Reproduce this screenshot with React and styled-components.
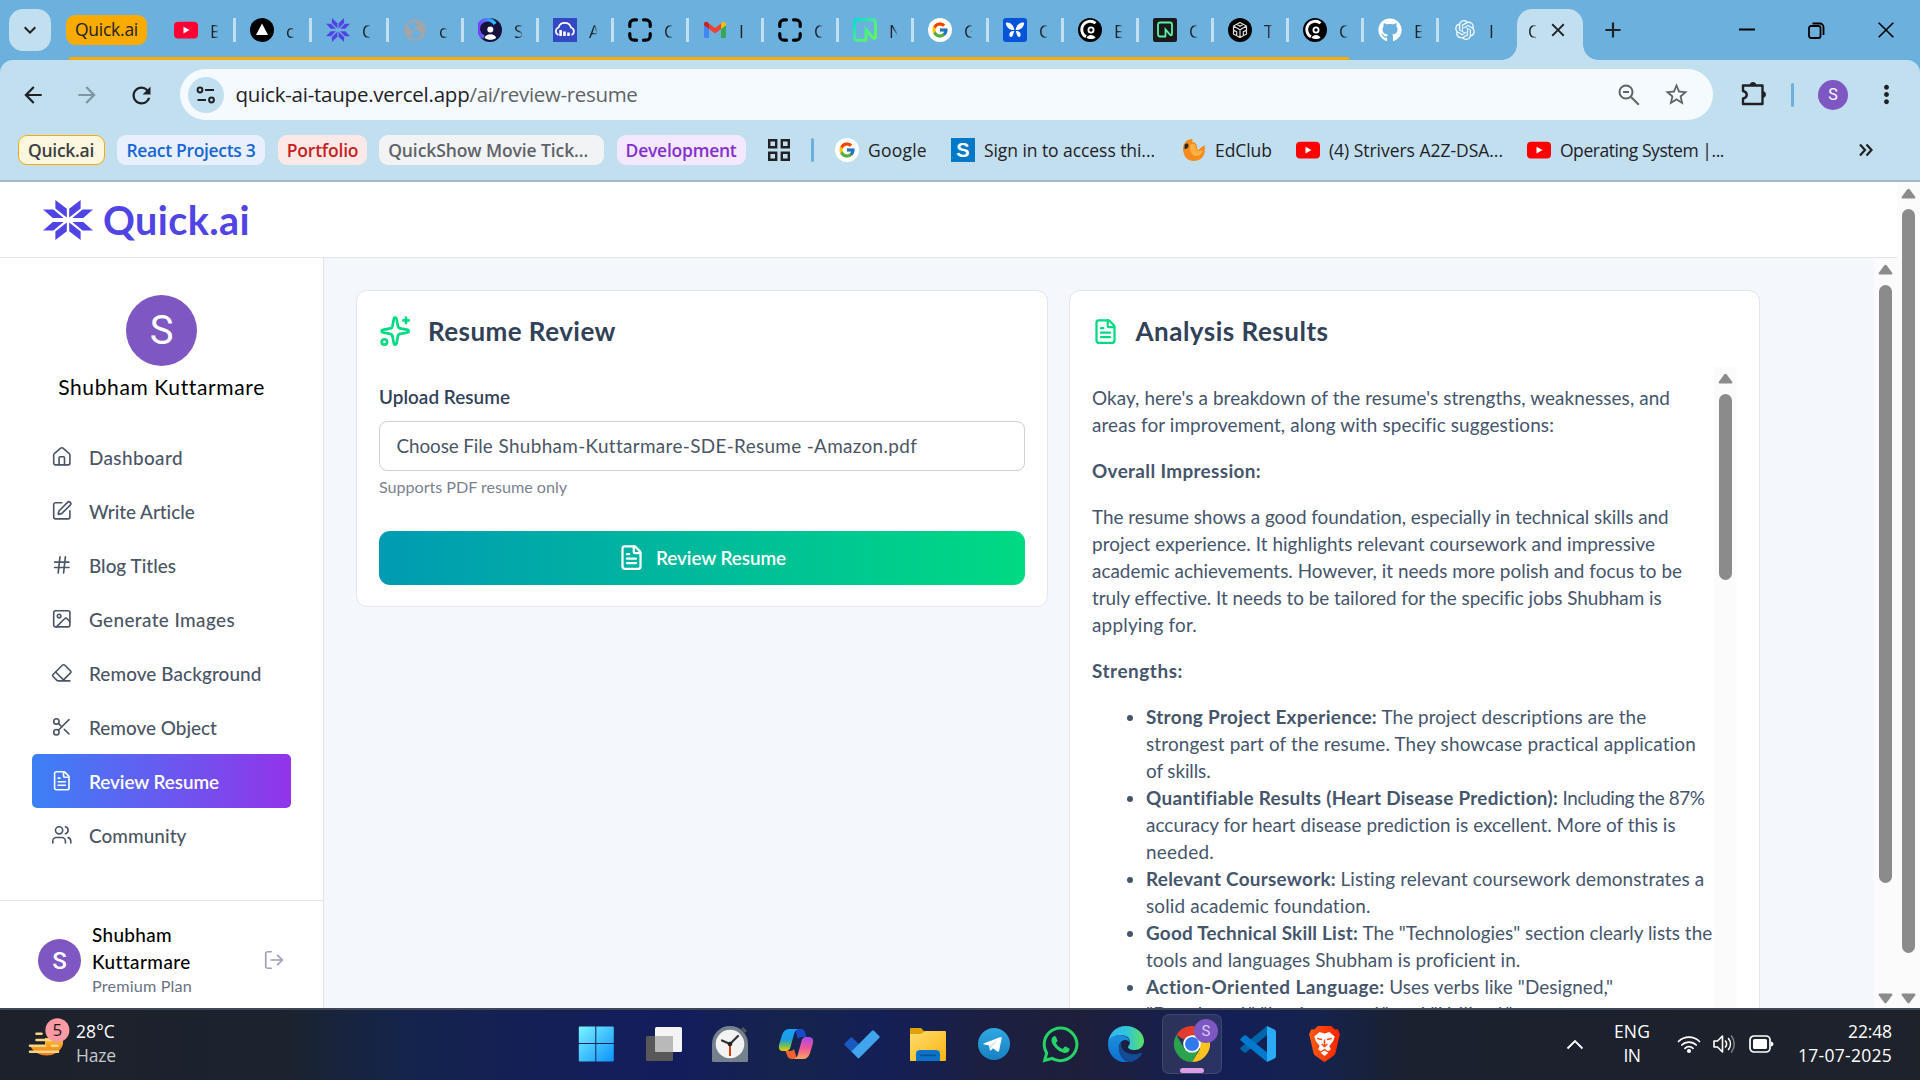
import React, { useLayoutEffect, useRef, useState } from 'react';
import styled, { createGlobalStyle } from 'styled-components';
import {
  House, SquarePen, Hash, Image, Eraser, Scissors, FileText, Users, LogOut, Sparkles,
} from 'lucide-react';
import { FcGoogle } from 'react-icons/fc';
import { FaGithub, FaWhatsapp } from 'react-icons/fa';
import { RiOpenaiFill } from 'react-icons/ri';
import {
  MdArrowBack, MdArrowForward, MdRefresh, MdStarOutline, MdMoreVert,
  MdKeyboardArrowDown, MdClose, MdAdd,
} from 'react-icons/md';

const ui = '"Open Sans", "Noto Sans", sans-serif';
const brand = 'Lato, "Open Sans", sans-serif';

const Global = createGlobalStyle`
  *, *::before, *::after { box-sizing: border-box; }
  body { margin: 0; overflow: hidden; }
  svg { display: block; flex: none; }
  p, h1, h2, ul { margin: 0; padding: 0; }
`;

/* ---------- text set on a known measure ---------- */
const Line = styled.span`
  display: inline-block;
  white-space: pre;
`;

function Fit({ w, children }) {
  const ref = useRef(null);
  const [spacing, setSpacing] = useState(0);
  useLayoutEffect(() => {
    const el = ref.current;
    el.style.letterSpacing = '0px';
    const natural = el.getBoundingClientRect().width;
    const s = (w - natural) / Math.max(1, el.textContent.length);
    el.style.letterSpacing = `${s}px`;
    setSpacing(s);
  }, [w]);
  return <Line ref={ref} style={{ letterSpacing: `${spacing}px` }}>{children}</Line>;
}

/* ---------- frame ---------- */
const Screen = styled.div`
  width: 1920px;
  height: 1080px;
  display: flex;
  flex-direction: column;
  overflow: hidden;
  background: #6cb1dd;
  font-family: ${ui};
  color: #1f2124;
`;

/* ---------- tab strip ---------- */
const TabStrip = styled.div`
  position: relative;
  height: 60px;
  flex: none;
  display: flex;
  align-items: center;
  padding-left: 9px;
`;
const TabSearch = styled.div`
  width: 42px;
  height: 42px;
  border-radius: 14px;
  background: #c2dff0;
  display: grid;
  place-items: center;
`;
const GroupChip = styled.div`
  width: 81px;
  height: 30px;
  margin: 0 13px 0 15px;
  border-radius: 9px;
  background: #f9ab00;
  font-size: 17.5px;
  line-height: 29px;
  text-align: center;
`;
const GroupLine = styled.div`
  position: absolute;
  left: 69px;
  top: 57px;
  width: 1280px;
  height: 3px;
  background: #f9ab00;
`;
const Tab = styled.div`
  width: ${(p) => p.$w}px;
  height: 24px;
  padding-left: 14px;
  display: flex;
  align-items: center;
  border-right: ${(p) => (p.$last ? 0 : 3)}px solid #c2dff0;
`;
const TabTitle = styled.span`
  width: 8px;
  margin-left: ${(p) => (p.$active ? 0 : 12)}px;
  overflow: hidden;
  font-size: 17.5px;
  line-height: 24px;
  padding-top: 2px;
  mask-image: linear-gradient(90deg, #000 50%, rgba(0, 0, 0, 0.25));
`;
const ActiveTab = styled.div`
  position: relative;
  width: 66px;
  height: 51px;
  margin: 9px 0 0 20px;
  padding: 0 14px 9px 11px;
  display: flex;
  align-items: center;
  justify-content: space-between;
  border-radius: 15px 15px 0 0;
  background: #c2dff0;
  &::before, &::after {
    content: '';
    position: absolute;
    bottom: 0;
    width: 15px;
    height: 15px;
  }
  &::before { left: -15px; background: radial-gradient(circle at 0 0, transparent 14.5px, #c2dff0 15px); }
  &::after { right: -15px; background: radial-gradient(circle at 100% 0, transparent 14.5px, #c2dff0 15px); }
`;
const NewTab = styled.div`
  margin-left: 17px;
  width: 26px;
  display: grid;
  place-items: center;
`;
const WindowButtons = styled.div`
  margin-left: auto;
  padding-right: 26.5px;
  display: flex;
  align-items: center;
  gap: 53px;
`;

const YouTube = ({ color = '#ff0033' }) => (
  <svg width="24" height="24" viewBox="0 0 24 24">
    <rect y="3.8" width="24" height="16.6" rx="4" fill={color} />
    <path d="M9.5 8.7v6.8l6-3.4z" fill="#fff" />
  </svg>
);
const Triangle = () => (
  <svg width="24" height="24"><circle cx="12" cy="12" r="12" fill="#000" /><path d="M12 5.5 18 17H6z" fill="#fff" /></svg>
);
const Burst = ({ w = 24, h = 24 }) => (
  <svg width={w} height={h} viewBox="-25 -20 50 40" preserveAspectRatio="none" fill="#5044e5">
    {[[1, 1], [-1, 1], [1, -1], [-1, -1]].map(([x, y]) => (
      <g key={`${x}${y}`} transform={`scale(${x} ${y})`}>
        <path d="M-12.6-20-1.2-11.2V-2.4L-12.6-11.6z" />
        <path d="M-25-10.6h10.5L-4.4-1.9h-10.8z" />
      </g>
    ))}
  </svg>
);
const Globe = () => (
  <svg width="24" height="24" viewBox="0 0 24 24">
    <circle cx="12" cy="12" r="9.8" fill="none" stroke="#a2a5a9" strokeWidth="2" />
    <path d="M3 9c3-1 5 1.500 6 3s2 2 0 4-.5 3.500-1 4.500c-4-2-6.500-7-5-11.500zM10 2.500c1 3 5 2 4.500 5s-4 1.500-3 4 5 0 6 2.500-1 5-3 7c6-1 8-6 7-11S15 1.500 10 2.500z" fill="#a2a5a9" />
  </svg>
);
const Profile = () => (
  <svg width="24" height="24" viewBox="0 0 24 24">
    <defs><linearGradient id="prof" x1="0" x2="1"><stop stopColor="#7a3cff" /><stop offset="1" stopColor="#20c4ff" /></linearGradient></defs>
    <circle cx="12" cy="12" r="12" fill="#17123d" />
    <path d="M6 19a9 9 0 1 1 11-13" fill="none" stroke="url(#prof)" strokeWidth="3.6" />
    <circle cx="12.3" cy="11.6" r="4" fill="#17123d" />
    <circle cx="12.3" cy="11.6" r="3" fill="#fff" />
    <path d="M6.600 20c1-5 10.500-5 11.500 0-3 2.400-8.500 2.400-11.500 0z" fill="#fff" />
  </svg>
);
const Cloud = () => (
  <svg width="24" height="24" viewBox="0 0 24 24">
    <rect width="24" height="24" fill="#3448c5" />
    <path d="M5.500 17a4 4 0 0 1 0-7.500 6.500 6.500 0 0 1 12.500 0 4 4 0 0 1 .5 7.500" fill="none" stroke="#fff" strokeWidth="1.700" />
    <path d="M7.600 12v6M11.500 13.500V18M15.500 14.500V18" stroke="#fff" strokeWidth="2.600" />
  </svg>
);
const Brackets = () => (
  <svg width="24" height="24" viewBox="0 0 24 24" fill="none" stroke="#000" strokeWidth="3.200" strokeLinecap="round">
    <path d="M1.800 8.500V6a4.200 4.200 0 0 1 4.200-4.200h2.500M15.500 1.800H18A4.200 4.200 0 0 1 22.200 6v2.500M22.200 15.500V18a4.200 4.200 0 0 1-4.200 4.200h-2.500M8.500 22.200H6A4.200 4.200 0 0 1 1.800 18v-2.500" />
  </svg>
);
const Gmail = () => (
  <svg width="24" height="24" viewBox="0 0 24 24">
    <path d="M1 7v11.500A1.500 1.500 0 0 0 2.500 20H6v-9z" fill="#4285f4" />
    <path d="M23 7v11.500a1.500 1.500 0 0 1-1.500 1.500H18v-9z" fill="#34a853" />
    <path d="M18 5.500V11l5-3.800V6c0-2-2.300-3-3.800-1.700z" fill="#fbbc04" />
    <path d="M6 5.500V11l6 4.500 6-4.500V5.500L12 10z" fill="#ea4335" />
    <path d="M1 6c0-2 2.300-3 3.800-1.700L6 5.500V11L1 7.200z" fill="#c5221f" />
  </svg>
);
const NeonBright = () => (
  <svg width="24" height="24" viewBox="0 0 24 24">
    <defs><linearGradient id="nb" x1="0" y1="0" x2="1" y2="1"><stop stopColor="#00e0d8" /><stop offset=".6" stopColor="#4df27c" /><stop offset="1" stopColor="#62f755" /></linearGradient></defs>
    <path d="M14 22.300H4.500a3 3 0 0 1-3-3V4.500a3 3 0 0 1 3-3h15a3 3 0 0 1 3 3v14.300c0 1.500-1.800 2-2.700 1L13 11.500v10.800" fill="none" stroke="url(#nb)" strokeWidth="3" />
  </svg>
);
const NeonDark = () => (
  <svg width="24" height="24" viewBox="0 0 24 24">
    <rect width="24" height="24" rx="2" fill="#1a1a1a" />
    <path d="M13 18.500H7a2 2 0 0 1-2-2V6.500a2 2 0 0 1 2-2h10a2 2 0 0 1 2 2v9.800c0 1-1.200 1.300-1.800.6L12.500 11.500v7" fill="none" stroke="#5ff0a8" strokeWidth="1.800" />
  </svg>
);
const GoogleDot = styled.span`
  width: 24px;
  height: 24px;
  border-radius: 50%;
  background: #fff;
  display: grid;
  place-items: center;
  flex: none;
`;
const Google = () => <GoogleDot><FcGoogle size={18} /></GoogleDot>;
const Butterfly = () => (
  <svg width="24" height="24" viewBox="0 0 24 24">
    <rect width="24" height="24" rx="3" fill="#0553d8" />
    <g fill="#fff">
      <path d="M11.300 12C11 8 8 4.500 4 4.500c-1.800 0-1.300 2 0 4 1.500 2.500 4 4 7.300 3.500z" />
      <path d="M12.700 12C13 8 16 4.500 20 4.500c1.800 0 1.300 2 0 4-1.500 2.500-4 4-7.300 3.500z" />
      <path d="M11.300 13c-3-.3-5 1.500-5 3.800S8.500 20 9.500 18s1-3 1.800-5zM12.700 13c3-.3 5 1.500 5 3.800S15.500 20 14.500 18s-1-3-1.800-5z" />
    </g>
  </svg>
);
const Clerk = () => (
  <svg width="24" height="24" viewBox="0 0 24 24">
    <circle cx="12" cy="12" r="12" fill="#000" />
    <path d="M17.500 5.300A8.300 8.300 0 1 0 8 18.800" fill="none" stroke="#fff" strokeWidth="2.800" />
    <circle cx="13" cy="12" r="2.600" fill="none" stroke="#fff" strokeWidth="1.800" />
    <path d="M8.500 19.600c2-3.400 7-3.400 9 0-2 2-7 2-9 0z" fill="#fff" />
  </svg>
);
const Hexagon = () => (
  <svg width="24" height="24" viewBox="0 0 24 24">
    <circle cx="12" cy="12" r="12" fill="#000" />
    <path d="M12 4.500 18.500 8v8L12 19.500 5.500 16V8zM5.500 8 12 11.700 18.500 8M12 11.700v7.800M8.700 6.300 12 8.200l3.300-1.900M5.500 12l3.200 1.900V17.700M18.500 12l-3.200 1.900V17.700" fill="none" stroke="#ddd" strokeWidth="1.200" />
  </svg>
);
const OpenAI = () => <RiOpenaiFill size={24} color="#f2f8fc" />;

const tabs = [
  [76, YouTube, 'B'], [76, Triangle, 'c'], [77, Burst, 'Q'], [75, Globe, 'c'], [75, Profile, 'S'],
  [75, Cloud, 'A'], [75, Brackets, 'C'], [75, Gmail, 'I'], [75, Brackets, 'C'], [75, NeonBright, 'N'],
  [75, Google, 'G'], [75, Butterfly, 'C'], [75, Clerk, 'E'], [75, NeonDark, 'C'], [75, Hexagon, 'T'],
  [75, Clerk, 'C'], [75, () => <FaGithub size={24} color="#fff" />, 'E'], [58, OpenAI, 'I'],
];

/* ---------- toolbar ---------- */
const Toolbar = styled.div`
  height: 122px;
  flex: none;
  border-radius: 13px 13px 0 0;
  background: #c2dff0;
  border-bottom: 2px solid #a2b9c9;
  padding-top: 9px;
`;
const AddressRow = styled.div`
  height: 51px;
  display: flex;
  align-items: center;
  padding: 0 0 0 20px;
`;
const NavIcon = styled.span`
  width: 26px;
  height: 26px;
  margin-right: 28px;
  flex: none;
  color: ${(p) => (p.$dim ? '#7e95a3' : '#1f2124')};
`;
const Omnibox = styled.div`
  width: 1533px;
  height: 51px;
  flex: none;
  margin-left: -2px;
  padding: 0 23px 0 8px;
  display: flex;
  align-items: center;
  border-radius: 26px;
  background: #f5fafe;
  color: #5f6468;
  font-size: 20.5px;
  line-height: 50px;
`;
const SiteInfo = styled.span`
  width: 36px;
  height: 36px;
  margin-right: 11.5px;
  border-radius: 50%;
  background: #c2dff0;
  display: grid;
  place-items: center;
`;
const Host = styled.span`
  height: 51px;
  color: #1f2124;
`;
const Path = styled.span`height: 51px;`;
const OmniActions = styled.span`
  margin-left: auto;
  display: flex;
  align-items: center;
  gap: 23px;
`;
const ExtSlot = styled.span`
  margin-left: 27px;
  color: #1f2124;
`;
const MoreSlot = styled.span`margin-left: 24px;`;
const Divider = styled.span`
  width: 3px;
  height: 24px;
  flex: none;
  margin: ${(p) => p.$m};
  border-radius: 2px;
  background: #6cb1dd;
`;
const Avatar = styled.span`
  width: ${(p) => p.$s}px;
  height: ${(p) => p.$s}px;
  flex: none;
  display: grid;
  place-items: center;
  border-radius: 50%;
  background: #7e57c2;
  color: #fff;
  font-family: Roboto, sans-serif;
  font-size: ${(p) => p.$f}px;
  line-height: 1;
`;
const BookmarkRow = styled.div`
  height: 60px;
  display: flex;
  align-items: center;
  padding: 0 47px 0 18px;
  font-size: 17.5px;
`;
const GroupBookmark = styled.span`
  width: ${(p) => p.$w}px;
  height: 30px;
  margin-right: 12.4px;
  padding-left: 9px;
  display: flex;
  align-items: center;
  flex: none;
  border: ${(p) => (p.$border ? `1px solid ${p.$border}` : '0')};
  border-radius: 9px;
  background: ${(p) => p.$bg};
  color: ${(p) => p.$fg};
  font-weight: 600;
  line-height: 26px;
`;
const GridSlot = styled.span`margin-left: 10px;`;
const Bookmark = styled.span`
  display: flex;
  align-items: center;
  gap: 9px;
  margin-left: ${(p) => p.$ml}px;
  line-height: 24px;
`;
const Overflow = styled.span`margin-left: auto;`;
const SBox = styled.span`
  width: 24px;
  height: 24px;
  background: #0078c8;
  color: #fff;
  display: grid;
  place-items: center;
  font: 700 20px/1 "Liberation Sans", sans-serif;
`;
const Bird = () => (
  <svg width="24" height="24" viewBox="0 0 24 24">
    <path d="M1 11C1 5 5 1 10 1c1.500 1 0 2 0 3 3 0 5 2 5 5 0 2 1 3 2 3 1-2 3-4 7-5-2 1.500-1.500 2.500-.5 3.500-1 .5-1.500 1.500-.5 2.500-1 6-5 10-11 10S2 19 2 15c-.8-1-1-2-1-4z" fill="#f58a1f" />
    <path d="M9 6c4-1 5 2 5 4 1 3 4 4 7 2-1 6-8 8-11 4-2-3-3-7-1-10z" fill="#ffae42" />
    <path d="M2.500 7c1-2 4-2 4 .5s-2 4-4 3.500z" fill="#2d2a2a" />
  </svg>
);

/* ---------- web page ---------- */
const Page = styled.div`
  height: 826px;
  flex: none;
  display: flex;
  overflow: hidden;
  background: #fff;
  font-family: ${brand};
`;
const Document = styled.div`
  width: 1897px;
  display: flex;
  flex-direction: column;
`;
const Header = styled.header`
  height: 76px;
  flex: none;
  padding: 0 0 0 43px;
  display: flex;
  align-items: center;
  gap: 10px;
  border-bottom: 1px solid #e0e3e7;
  color: #5044e5;
  font-size: 39.5px;
  font-weight: 700;
  line-height: 60px;
`;
const Body = styled.div`
  flex: 1;
  display: flex;
  min-height: 0;
`;
const Sidebar = styled.aside`
  width: 324px;
  display: flex;
  flex-direction: column;
  border-right: 1px solid #e0e3e7;
  background: #fff;
`;
const UserBlock = styled.div`
  height: 172px;
  padding-top: 37px;
  display: flex;
  flex-direction: column;
  align-items: center;
  font-size: 21px;
  line-height: 32px;
  color: #000;
  gap: 5px;
`;
const Nav = styled.nav`
  padding: 0 32px;
  flex: 1;
`;
const NavItem = styled.div`
  height: 54px;
  padding-left: 19px;
  display: flex;
  align-items: center;
  gap: 16.4px;
  border-radius: 5px;
  background: ${(p) => (p.$active ? 'linear-gradient(90deg, #3c81f6, #9234ea)' : 'none')};
  color: ${(p) => (p.$active ? '#fff' : '#4a5565')};
  font-size: 18.9px;
  font-weight: ${(p) => (p.$active ? 600 : 500)};
  line-height: 52px;
`;
const NavLabel = styled.span`padding-top: 1px;`;
const Account = styled.div`
  height: 108px;
  padding: 0 0 0 38px;
  display: flex;
  align-items: center;
  border-top: 1px solid #e0e3e7;
  font-size: 18.9px;
  line-height: 27px;
  font-weight: 500;
  color: #000;
  svg { margin-top: 11px; }
  & > span { margin-top: 12px; }
`;
const AccountText = styled.div`
  width: 171px;
  margin-left: 11px;
  padding-top: 9px;
  display: flex;
  flex-direction: column;
  align-items: flex-start;
`;
const Plan = styled.small`
  font-size: 16.2px;
  line-height: 22px;
  font-weight: 400;
  color: #6a7282;
`;
const Main = styled.main`
  flex: 1;
  display: flex;
  align-items: flex-start;
  gap: 21px;
  padding: 32px 0 0 32px;
  background: #f4f7fb;
`;
const Card = styled.section`
  width: ${(p) => p.$w}px;
  height: ${(p) => p.$h}px;
  padding: 21px 22px;
  border: 1px solid #e3e6eb;
  border-radius: 11px;
  background: #fff;
  color: #45556c;
`;
const CardTitle = styled.h1`
  height: 38px;
  display: flex;
  align-items: center;
  gap: ${(p) => p.$gap}px;
  color: #314158;
  font-size: 26px;
  font-weight: 700;
  line-height: 38px;
  svg { color: #00da83; }
`;
const FieldLabel = styled.p`
  margin-top: 33px;
  color: #314158;
  font-size: 18.9px;
  line-height: 27px;
  font-weight: 600;
`;
const FileInput = styled.div`
  height: 50px;
  margin-top: 11px;
  padding: 0 0 2px 16.5px;
  display: flex;
  align-items: center;
  gap: 6px;
  border: 1px solid #cdd2d9;
  border-radius: 8px;
  color: #4a5565;
  font-size: 18.9px;
`;
const Hint = styled.p`
  margin-top: 5px;
  color: #7a8291;
  font-size: 16.2px;
  font-weight: 400;
  line-height: 22px;
`;
const Submit = styled.div`
  height: 54px;
  margin-top: 33px;
  display: flex;
  align-items: center;
  justify-content: center;
  gap: 11px;
  border-radius: 11px;
  background: linear-gradient(90deg, #009bb3, #00da83);
  color: #fff;
  font-size: 18.9px;
  font-weight: 600;
  line-height: 27px;
  svg { margin-bottom: 2px; }
`;
const SubmitLabel = styled.span`
  height: 29px;
`;
const Results = styled.div`
  height: 720px;
  margin: 17px 0 0;
  display: flex;
  justify-content: space-between;
  font-size: 18.9px;
  line-height: 27px;
`;
const Prose = styled.div`
  padding-top: 17px;
  b { font-weight: 700; }
`;
const Para = styled.p`
  margin-bottom: 19px;
  display: flex;
  flex-direction: column;
  align-items: flex-start;
`;
const List = styled.ul`
  padding-left: 54px;
  list-style: disc;
`;
const Item = styled.li`
  &::marker { font-size: 19px; }
`;
const Row = styled.span`
  display: flex;
  gap: 4.5px;
`;
const FirstRow = styled(Row)`
  display: inline-flex;
  vertical-align: top;
`;

/* ---------- scroll bars ---------- */
const Bar = styled.div`
  width: 23px;
  height: ${(p) => (p.$h ? `${p.$h}px` : 'auto')};
  flex: none;
  padding: ${(p) => p.$pt}px 0 4px;
  display: flex;
  flex-direction: column;
  align-items: center;
  background: #fbfbfc;
`;
const Thumb = styled.div`
  width: 13px;
  height: ${(p) => p.$h}px;
  margin: 10px 0 auto;
  border-radius: 7px;
  background: #8b8b8b;
`;
const Arrow = ({ down }) => (
  <svg width="15" height="11" viewBox="0 0 15 11">
    <path d={down ? 'M1.5.5h12q1.400.3.7 1.700L8.600 9.800q-1.100 1-2.200 0L.8 2.200Q.1.800 1.500.500z' : 'M1.500 10.500h12q1.400-.3.7-1.700L8.600 1.200q-1.100-1-2.200 0L.8 8.800q-.7 1.400.7 1.700z'} fill="#8b8b8b" />
  </svg>
);

/* ---------- task bar ---------- */
const Taskbar = styled.div`
  height: 72px;
  flex: none;
  display: flex;
  align-items: center;
  padding-bottom: 2px;
  border-top: 2px solid #3f4757;
  background: linear-gradient(90deg, #1d212b 0, #1c232e 280px, #14244b 400px, #141f57 540px, #141d5c 680px, #15244c 790px, #141f57 880px, #1b1f42 980px, #1d1f3a 1080px, #141f57 1230px, #15224c 1320px, #1b212e 1410px, #1d222b 1920px);
  color: #fff;
  font-size: 17.5px;
  line-height: 24px;
`;
const Weather = styled.div`
  width: 568px;
  padding-left: 27px;
  display: flex;
  align-items: center;
  gap: 5px;
`;
const Stack = styled.div`
  display: flex;
  flex-direction: column;
  padding-bottom: 3px;
  align-items: ${(p) => p.$align || 'flex-start'};
`;
const Dim = styled.span`color: #c5c8cd;`;
const Apps = styled.div`
  width: 786px;
  flex: none;
  display: flex;
  justify-content: space-between;
`;
const AppSlot = styled.div`
  width: 60px;
  height: 60px;
  position: relative;
  display: grid;
  place-items: center;
  border-radius: 7px;
  border: ${(p) => (p.$on ? '1px solid rgba(255,255,255,.1)' : '0')};
  background: ${(p) => (p.$on ? 'rgba(255,255,255,.09)' : 'none')};
`;
const Running = styled.span`
  position: absolute;
  left: 17px;
  bottom: 0;
  width: 24px;
  height: 5px;
  border-radius: 3px;
  background: #dc9fe4;
`;
const AppBadge = styled(Avatar)`
  position: absolute;
  left: 31px;
  top: 4px;
  color: #d9c9f2;
`;
const Tray = styled.div`
  flex: 1;
  padding-right: 28px;
  display: flex;
  align-items: center;
  justify-content: flex-end;
`;
const LangSlot = styled.div`margin-left: 30px;`;
const TrayGroup = styled.div`
  margin: 0 24px 0 27px;
  display: flex;
  align-items: center;
  gap: 12px;
`;

const appIcons = [
  <svg width="36" height="36" viewBox="2.2 0.5 36 36" overflow="visible">
    <defs><linearGradient id="win" x1="0" y1="0" x2="1" y2="1"><stop stopColor="#7af4ff" /><stop offset="1" stopColor="#0a92fb" /></linearGradient></defs>
    <path d="M1 2q0-1 1-1h15.500v16.500H1zM18.500 1H35q1 0 1 1v15.500H18.500zM1 18.500h16.500V36H2q-1 0-1-1zM18.500 18.500H36V35q0 1-1 1H18.500z" fill="url(#win)" />
  </svg>,
  <svg width="38" height="36" viewBox="0 0 38 36">
    <rect x="10" y="1" width="27" height="25" rx="1.500" fill="#f4f4f4" />
    <rect x="1" y="10" width="27" height="25" rx="1.500" fill="#585858" />
    <path d="M10 10h18v16H11q-1 0-1-1z" fill="#b9b9b9" />
  </svg>,
  <svg width="36" height="36" viewBox="0 0 36 36">
    <path d="m29 3 2-2 4 4-2 2z" fill="#555" />
    <path d="M0 18a18 18 0 0 1 36 0v17q0 1-1 1H1q-1 0-1-1z" fill="#75828e" />
    <circle cx="18" cy="18" r="14.300" fill="#f3f3f3" />
    <path d="M18 18 26 10M18 18 10 14.500" stroke="#333" strokeWidth="2.200" strokeLinecap="round" />
    <path d="M18 18v12" stroke="#d83b01" strokeWidth="2" />
    <circle cx="18" cy="18" r="2.300" fill="#222" />
  </svg>,
  <svg width="36" height="36" viewBox="0 0 36 36">
    <defs>
      <linearGradient id="co1" x1="0" y1="0" x2="0" y2="1"><stop stopColor="#18a3f8" /><stop offset=".5" stopColor="#1f9de0" /><stop offset=".75" stopColor="#6dbf5b" /><stop offset="1" stopColor="#f2c80f" /></linearGradient>
      <linearGradient id="co2" x1="0" y1="0" x2="0" y2="1"><stop stopColor="#a44be8" /><stop offset=".5" stopColor="#f0569a" /><stop offset="1" stopColor="#ffa45c" /></linearGradient>
    </defs>
    <path d="M17 3h6q3 0 4 3l1.500 5H24q-3 0-4 2z" fill="#1a49c9" />
    <path d="M11 3h9q-3 1-4 5l-3.500 13q-1 4-4.500 4H5q-5 0-4-6l3-10q2-6 7-6z" fill="url(#co1)" />
    <path d="M19 33h-5q-4 0-5-4l-1.500-4H12q3 0 4-2z" fill="#f4602f" />
    <path d="M25 33h-9q3-1 4-5l3.500-13q1-4 4.500-4h3q5 0 4 6l-3 10q-2 6-7 6z" fill="url(#co2)" />
  </svg>,
  <svg width="36" height="36" viewBox="0 0 36 36">
    <path d="m.8 17.300 5.700-5.600q1-1 2 0l8 8-7.700 7.600L.8 19.300q-1-1 0-2z" fill="#185abd" />
    <path d="M7.500 25.500 28 4.700q1-1 2 0L35.200 10q1 1 0 2L15.500 31.700q-1 1-2 0z" fill="#41a5ee" />
  </svg>,
  <svg width="36" height="36" viewBox="0 0 36 36">
    <defs><linearGradient id="fo" x1="0" y1="0" x2="1" y2="1"><stop stopColor="#ffdc6b" /><stop offset="1" stopColor="#fbb514" /></linearGradient></defs>
    <path d="M0 3q0-1 1-1h10l4 4v4H0z" fill="#e0a10b" />
    <path d="M0 8h11l4-3h20q1 0 1 1v28q0 1-1 1H1q-1 0-1-1z" fill="url(#fo)" />
    <path d="M6 35v-7q0-4 4-4h16q4 0 4 4v7z" fill="#0b74c9" />
    <path d="M11 29.300h14" stroke="#0a4f93" strokeWidth="1.800" strokeLinecap="round" />
  </svg>,
  <svg width="36" height="36" viewBox="0 0 36 36">
    <defs><linearGradient id="te" x1="0" y1="0" x2="0" y2="1"><stop stopColor="#2fa8e2" /><stop offset="1" stopColor="#1781c2" /></linearGradient></defs>
    <circle cx="18" cy="18" r="16" fill="url(#te)" />
    <path d="m7.500 17.500 17-6.500q1.400-.4 1.200 1.200l-2.600 12.600q-.5 1.500-1.800.6l-4.300-3.200-2.200 2.200q-.8.600-1-.5l-.8-4.400-5.300-1.300q-1-.3-.2-.7z" fill="#fff" />
    <path d="m13.500 20 8.500-6.500-6.600 7.200-.6 3.700z" fill="#c6dcea" />
  </svg>,
  <FaWhatsapp size={41} color="#25d366" />,
  <svg width="36" height="36" viewBox="0 0 36 36">
    <defs>
      <linearGradient id="e1" x1="0" y1="0" x2="1" y2="0"><stop stopColor="#37b5f3" /><stop offset=".55" stopColor="#2fc7d6" /><stop offset="1" stopColor="#5fe05f" /></linearGradient>
      <linearGradient id="e2" x1="0" y1="0" x2="0" y2="1"><stop stopColor="#1c8fdc" /><stop offset="1" stopColor="#0d6fd0" /></linearGradient>
    </defs>
    <path d="M0 17C1 7 8 0 18 0s18 7 18 15c0 6-5 9-9 9-5 0-7-1.500-7-3 0-1 2-2 2-5 0-5-5-7-9-7-6 0-11 3-13 8z" fill="url(#e1)" />
    <path d="M0 18c0-6 6-9 12-9 5 0 10 3 10 8-1-2-3-3-5-3-4 0-6 4-6 8 0 8 6 14 11 14a18 18 0 0 1-22-18z" fill="url(#e2)" />
    <path d="M14 15c-3 2-4 5-3 9 1 7 7 12 12 12 5-1 9-5 11-8 .5-1-.5-1.500-1.500-1-8 3-17 0-19-6-.5-2-.5-4 .5-6z" fill="#124c96" />
  </svg>,
  <svg width="36" height="36" viewBox="0 0 36 36">
    <path d="M18 18 2.400 9A18 18 0 0 1 33.600 9z" fill="#e33b2e" />
    <path d="M18 9h15.600A18 18 0 0 1 18 36l8-13z" fill="#fcc31e" />
    <path d="M2.400 9 10.200 22.500 18 27l7.800-4.500L18 36A18 18 0 0 1 2.400 9z" fill="#2ba24c" />
    <circle cx="18" cy="18" r="8.800" fill="#fff" />
    <circle cx="18" cy="18" r="7" fill="#3079ee" />
  </svg>,
  <svg width="36" height="36" viewBox="0 0 36 36">
    <path d="M27 0v9L6 26.500q-1 .7-2 0l-3.300-3q-1-1 0-2z" fill="#0065a9" />
    <path d="M27 36v-9.500L6 9.500q-1-.7-2 0l-3.300 3q-1 1 0 2z" fill="#007acc" />
    <path d="m27 0 7.500 3.500Q36 4 36 6v24q0 2-1.500 2.600L27 36z" fill="#2aabf4" />
  </svg>,
  <svg width="31" height="36" viewBox="0 0 32 36" preserveAspectRatio="none">
    <defs><linearGradient id="br" x1="0" x2="1"><stop stopColor="#ff5a12" /><stop offset="1" stopColor="#ff2200" /></linearGradient></defs>
    <path d="M9 0h14l3.500 3.500 3-.3L32 8l-1 3.500-3.500 15q-.6 2-2.500 3.500L17 35.500q-1 .7-2 0L7 30q-2-1.500-2.500-3.500L1 11.500 0 8l2.500-4.800 3 .3z" fill="url(#br)" />
    <path d="M16 7.500 21 6l5.500 4.500L25 15l-4 5 1.500 3.500-2.800 1.800L16 22.800l-3.700 2.500-2.800-1.800L11 20l-4-5-1.500-4.500L11 6z" fill="#fff" />
    <path d="m16 24.500 4 2.300L16 30l-4-3.200z" fill="#fff" />
    <path d="m8.500 12.500 5 1M23.500 12.500l-5 1M16 13.500v6M13 18l3 2.500 3-2.500" stroke="#ff4610" strokeWidth="1.600" fill="none" />
  </svg>,
];

const nav = [
  [House, 'Dashboard', 94], [SquarePen, 'Write Article', 106], [Hash, 'Blog Titles', 87],
  [Image, 'Generate Images', 146], [Eraser, 'Remove Background', 172.5], [Scissors, 'Remove Object', 128],
  [FileText, 'Review Resume', 130], [Users, 'Community', 97.5],
];

const findings = [
  ['Strong Project Experience:', 231, 'The project descriptions are the', 265,
    [['strongest part of the resume. They showcase practical application', 550.5], ['of skills.', 64.5]]],
  ['Quantifiable Results (Heart Disease Prediction):', 412.5, 'Including the 87%', 142,
    [['accuracy for heart disease prediction is excellent. More of this is', 530], ['needed.', 68]]],
  ['Relevant Coursework:', 190, 'Listing relevant coursework demonstrates a', 364,
    [['solid academic foundation.', 225]]],
  ['Good Technical Skill List:', 212, 'The "Technologies" section clearly lists the', 350,
    [['tools and languages Shubham is proficient in.', 374]]],
  ['Action-Oriented Language:', 239, 'Uses verbs like "Designed,"', 224,
    [['"Developed," "Implemented," and "Utilized."', 367]]],
];

export default function App() {
  return (
    <Screen>
      <Global />
      <TabStrip>
        <TabSearch><MdKeyboardArrowDown size={24} /></TabSearch>
        <GroupChip><Fit w={63}>Quick.ai</Fit></GroupChip>
        {tabs.map(([w, Icon, title], i) => (
          <Tab key={i} $w={w} $last={i === tabs.length - 1}>
            <Icon />
            <TabTitle>{title}</TabTitle>
          </Tab>
        ))}
        <ActiveTab>
          <TabTitle $active>Q</TabTitle>
          <MdClose size={22} />
        </ActiveTab>
        <NewTab><MdAdd size={26} /></NewTab>
        <WindowButtons>
          <svg width="16" height="16"><path d="M0 7.500h16" stroke="#000" strokeWidth="2" /></svg>
          <svg width="17" height="17" viewBox="0 0 17 17" fill="none" stroke="#000" strokeWidth="1.800">
            <rect x="1" y="4" width="11.500" height="12" rx="2" />
            <path d="M4.500 1.500H12a3.500 3.500 0 0 1 3.500 3.500v8" />
          </svg>
          <svg width="16" height="16"><path d="m.7.700 14.600 14.600M15.300.7.700 15.300" stroke="#000" strokeWidth="1.600" /></svg>
        </WindowButtons>
        <GroupLine />
      </TabStrip>

      <Toolbar>
        <AddressRow>
          <NavIcon><MdArrowBack size={26} /></NavIcon>
          <NavIcon $dim><MdArrowForward size={26} /></NavIcon>
          <NavIcon><MdRefresh size={27} /></NavIcon>
          <Omnibox>
            <SiteInfo>
              <svg width="20" height="18" viewBox="0 0 20 18" fill="none" stroke="#1f2124" strokeWidth="2">
                <circle cx="4" cy="4" r="2.400" /><path d="M9 4h9M1.500 14H10" /><circle cx="15.500" cy="14" r="2.400" />
              </svg>
            </SiteInfo>
            <Host><Fit w={234}>quick-ai-taupe.vercel.app</Fit></Host>
            <Path><Fit w={168}>/ai/review-resume</Fit></Path>
            <OmniActions>
              <svg width="22" height="22" viewBox="0 0 22 22" fill="none" stroke="#5f6468" strokeWidth="2">
                <circle cx="8" cy="8" r="6.500" /><path d="m12.800 12.800 8 8M5 8h6" />
              </svg>
              <MdStarOutline size={27} />
            </OmniActions>
          </Omnibox>
          <ExtSlot>
            <svg width="27" height="27" viewBox="0 0 27 27" fill="none" stroke="#1f2124" strokeWidth="2.400" strokeLinejoin="round">
              <path d="M3 4.500h19.500V23H3v-5.500c5-1 5-6.500 0-7.500z" />
              <path d="M10 4.500a3 3 0 0 1 6 0zM22.500 10.500a3 3 0 0 1 0 6z" fill="#1f2124" strokeWidth="1" />
            </svg>
          </ExtSlot>
          <Divider $m="0 24px 0 24px" />
          <Avatar $s={30} $f={16}>S</Avatar>
          <MoreSlot><MdMoreVert size={29} /></MoreSlot>
        </AddressRow>
        <BookmarkRow>
          <GroupBookmark $w={87} $bg="#fef7e0" $fg="#3c4043" $border="#f9ab00"><Fit w={66}>Quick.ai</Fit></GroupBookmark>
          <GroupBookmark $w={148} $bg="#e8f0fe" $fg="#1967d2"><Fit w={129}>React Projects 3</Fit></GroupBookmark>
          <GroupBookmark $w={89} $bg="#fce8e6" $fg="#c5221f"><Fit w={71.5}>Portfolio</Fit></GroupBookmark>
          <GroupBookmark $w={225} $bg="#f1f3f4" $fg="#5f6368"><Fit w={200}>QuickShow Movie Tick...</Fit></GroupBookmark>
          <GroupBookmark $w={129} $bg="#f3e8fd" $fg="#8430ce"><Fit w={111}>Development</Fit></GroupBookmark>
          <GridSlot>
            <svg width="22" height="22" viewBox="0 0 22 22" fill="none" stroke="#1f2124" strokeWidth="2.400">
              <path d="M1.200 1.200h7v7h-7zM13.800 1.200h7v7h-7zM1.200 13.800h7v7h-7zM13.800 13.800h7v7h-7z" />
            </svg>
          </GridSlot>
          <Divider $m="0 0 0 21px" />
          <Bookmark $ml={21}><Google /><Fit w={59}>Google</Fit></Bookmark>
          <Bookmark $ml={24}><SBox>S</SBox><Fit w={171}>Sign in to access thi...</Fit></Bookmark>
          <Bookmark $ml={27}><Bird /><Fit w={57}>EdClub</Fit></Bookmark>
          <Bookmark $ml={24}><YouTube color="#ff0000" /><Fit w={174}>(4) Strivers A2Z-DSA...</Fit></Bookmark>
          <Bookmark $ml={24}><YouTube color="#ff0000" /><Fit w={164}>Operating System |...</Fit></Bookmark>
          <Overflow>
            <svg width="14" height="14" viewBox="0 0 14 14" fill="none" stroke="#1f2124" strokeWidth="2.200"><path d="m1 1.500 5 5.500-5 5.500M7.500 1.500l5 5.500-5 5.500" /></svg>
          </Overflow>
        </BookmarkRow>
      </Toolbar>

      <Page>
        <Document>
          <Header><Burst w={50} h={40} /><Fit w={147}>Quick.ai</Fit></Header>
          <Body>
            <Sidebar>
              <UserBlock>
                <Avatar $s={71} $f={40}>S</Avatar>
                <Fit w={206}>Shubham Kuttarmare</Fit>
              </UserBlock>
              <Nav>
                {nav.map(([Icon, label, w]) => (
                  <NavItem key={label} $active={label === 'Review Resume'}>
                    <Icon size={21.6} strokeWidth={1.8} />
                    <NavLabel><Fit w={w}>{label}</Fit></NavLabel>
                  </NavItem>
                ))}
              </Nav>
              <Account>
                <Avatar $s={43} $f={24}>S</Avatar>
                <AccountText>
                  <Fit w={80}>Shubham</Fit>
                  <Fit w={98}>Kuttarmare</Fit>
                  <Plan><Fit w={100}>Premium Plan</Fit></Plan>
                </AccountText>
                <LogOut size={22} strokeWidth={1.8} color="#99a1af" />
              </Account>
            </Sidebar>
            <Main>
              <Card $w={692} $h={317}>
                <CardTitle $gap={16.5}><Sparkles size={32.4} /><Fit w={188}>Resume Review</Fit></CardTitle>
                <FieldLabel><Fit w={131}>Upload Resume</Fit></FieldLabel>
                <FileInput>
                  <Fit w={96}>Choose File</Fit>
                  <Fit w={418}>Shubham-Kuttarmare-SDE-Resume -Amazon.pdf</Fit>
                </FileInput>
                <Hint><Fit w={188}>Supports PDF resume only</Fit></Hint>
                <Submit><FileText size={27} /><SubmitLabel><Fit w={130}>Review Resume</Fit></SubmitLabel></Submit>
              </Card>
              <Card $w={691} $h={810}>
                <CardTitle $gap={16.5}><FileText size={27} /><Fit w={193}>Analysis Results</Fit></CardTitle>
                <Results>
                  <Prose>
                    <Para>
                      <Fit w={578}>Okay, here's a breakdown of the resume's strengths, weaknesses, and</Fit>
                      <Fit w={462}>areas for improvement, along with specific suggestions:</Fit>
                    </Para>
                    <Para><b><Fit w={169}>Overall Impression:</Fit></b></Para>
                    <Para>
                      <Fit w={577}>The resume shows a good foundation, especially in technical skills and</Fit>
                      <Fit w={563}>project experience. It highlights relevant coursework and impressive</Fit>
                      <Fit w={590}>academic achievements. However, it needs more polish and focus to be</Fit>
                      <Fit w={569}>truly effective. It needs to be tailored for the specific jobs Shubham is</Fit>
                      <Fit w={105}>applying for.</Fit>
                    </Para>
                    <Para><b><Fit w={91}>Strengths:</Fit></b></Para>
                    <List>
                      {findings.map(([head, hw, rest, rw, more]) => (
                        <Item key={head}>
                          <FirstRow><b><Fit w={hw}>{head}</Fit></b><Fit w={rw}>{rest}</Fit></FirstRow>
                          {more.map(([t, w]) => <Row key={t}><Fit w={w}>{t}</Fit></Row>)}
                        </Item>
                      ))}
                    </List>
                  </Prose>
                  <Bar $h={720} $pt={6}><Arrow /><Thumb $h={186} /></Bar>
                </Results>
              </Card>
            </Main>
            <Bar $pt={6}><Arrow /><Thumb $h={598} /><Arrow down /></Bar>
          </Body>
        </Document>
        <Bar $pt={6}><Arrow /><Thumb $h={744} /><Arrow down /></Bar>
      </Page>

      <Taskbar>
        <Weather>
          <svg width="44" height="52" viewBox="0 0 44 52">
            <defs><linearGradient id="sun" x1="0" y1="0" x2="0" y2="1"><stop stopColor="#fcc02e" /><stop offset="1" stopColor="#f07a1c" /></linearGradient></defs>
            <path d="M3 27a17 14.500 0 0 0 33-1v-6H18v7z" fill="url(#sun)" />
            <path d="M9.500 15.700h5M9.500 22h15M3 27.700h15M25 27.700h5.500M3 33.700h28" stroke="#f6d583" strokeWidth="2.600" strokeLinecap="round" />
            <circle cx="30.400" cy="12.200" r="12" fill="#ff99a4" />
            <text x="30.400" y="18.200" textAnchor="middle" fontSize="17" fontFamily="Open Sans, sans-serif" fill="#1b1b1b">5</text>
          </svg>
          <Stack><Fit w={39}>28°C</Fit><Dim><Fit w={40}>Haze</Fit></Dim></Stack>
        </Weather>
        <Apps>
          {appIcons.map((icon, i) => (
            <AppSlot key={i} $on={i === 9}>
              {icon}
              {i === 9 && <><AppBadge $s={24} $f={15}>S</AppBadge><Running /></>}
            </AppSlot>
          ))}
        </Apps>
        <Tray>
          <svg width="18" height="11" viewBox="0 0 18 11" fill="none" stroke="#fff" strokeWidth="1.900"><path d="m1.500 9.500 7.500-7.500 7.500 7.500" /></svg>
          <LangSlot><Stack $align="center"><Fit w={36}>ENG</Fit><Fit w={17}>IN</Fit></Stack></LangSlot>
          <TrayGroup>
            <svg width="24" height="20" viewBox="0 0 24 20" fill="none" stroke="#fff" strokeWidth="1.700" strokeLinecap="round">
              <path d="M1.500 7.500a15 15 0 0 1 21 0M4.800 11a10.300 10.300 0 0 1 14.400 0M8 14.300a5.700 5.700 0 0 1 8 0" /><circle cx="12" cy="17" r="1.200" fill="#fff" />
            </svg>
            <svg width="24" height="20" viewBox="0 0 24 20" fill="none" stroke="#fff" strokeWidth="1.600" strokeLinecap="round" strokeLinejoin="round">
              <path d="M1 7h3.500L9.500 2v16l-5-5H1zM12.500 7a5 5 0 0 1 0 6M15.500 4.500a9 9 0 0 1 0 11" /><path d="M18.500 2a13 13 0 0 1 0 16" stroke="#777c86" />
            </svg>
            <svg width="25" height="18" viewBox="0 0 25 18">
              <rect x="1" y="1" width="20" height="16" rx="4" fill="none" stroke="#fff" strokeWidth="1.700" />
              <rect x="4" y="4" width="14" height="10" rx="1.500" fill="#fff" /><path d="M22 6.500q2.500.5 2.500 2.500T22 11.500z" fill="#fff" />
            </svg>
          </TrayGroup>
          <Stack $align="flex-end"><Fit w={44}>22:48</Fit><Fit w={94}>17-07-2025</Fit></Stack>
        </Tray>
      </Taskbar>
    </Screen>
  );
}
